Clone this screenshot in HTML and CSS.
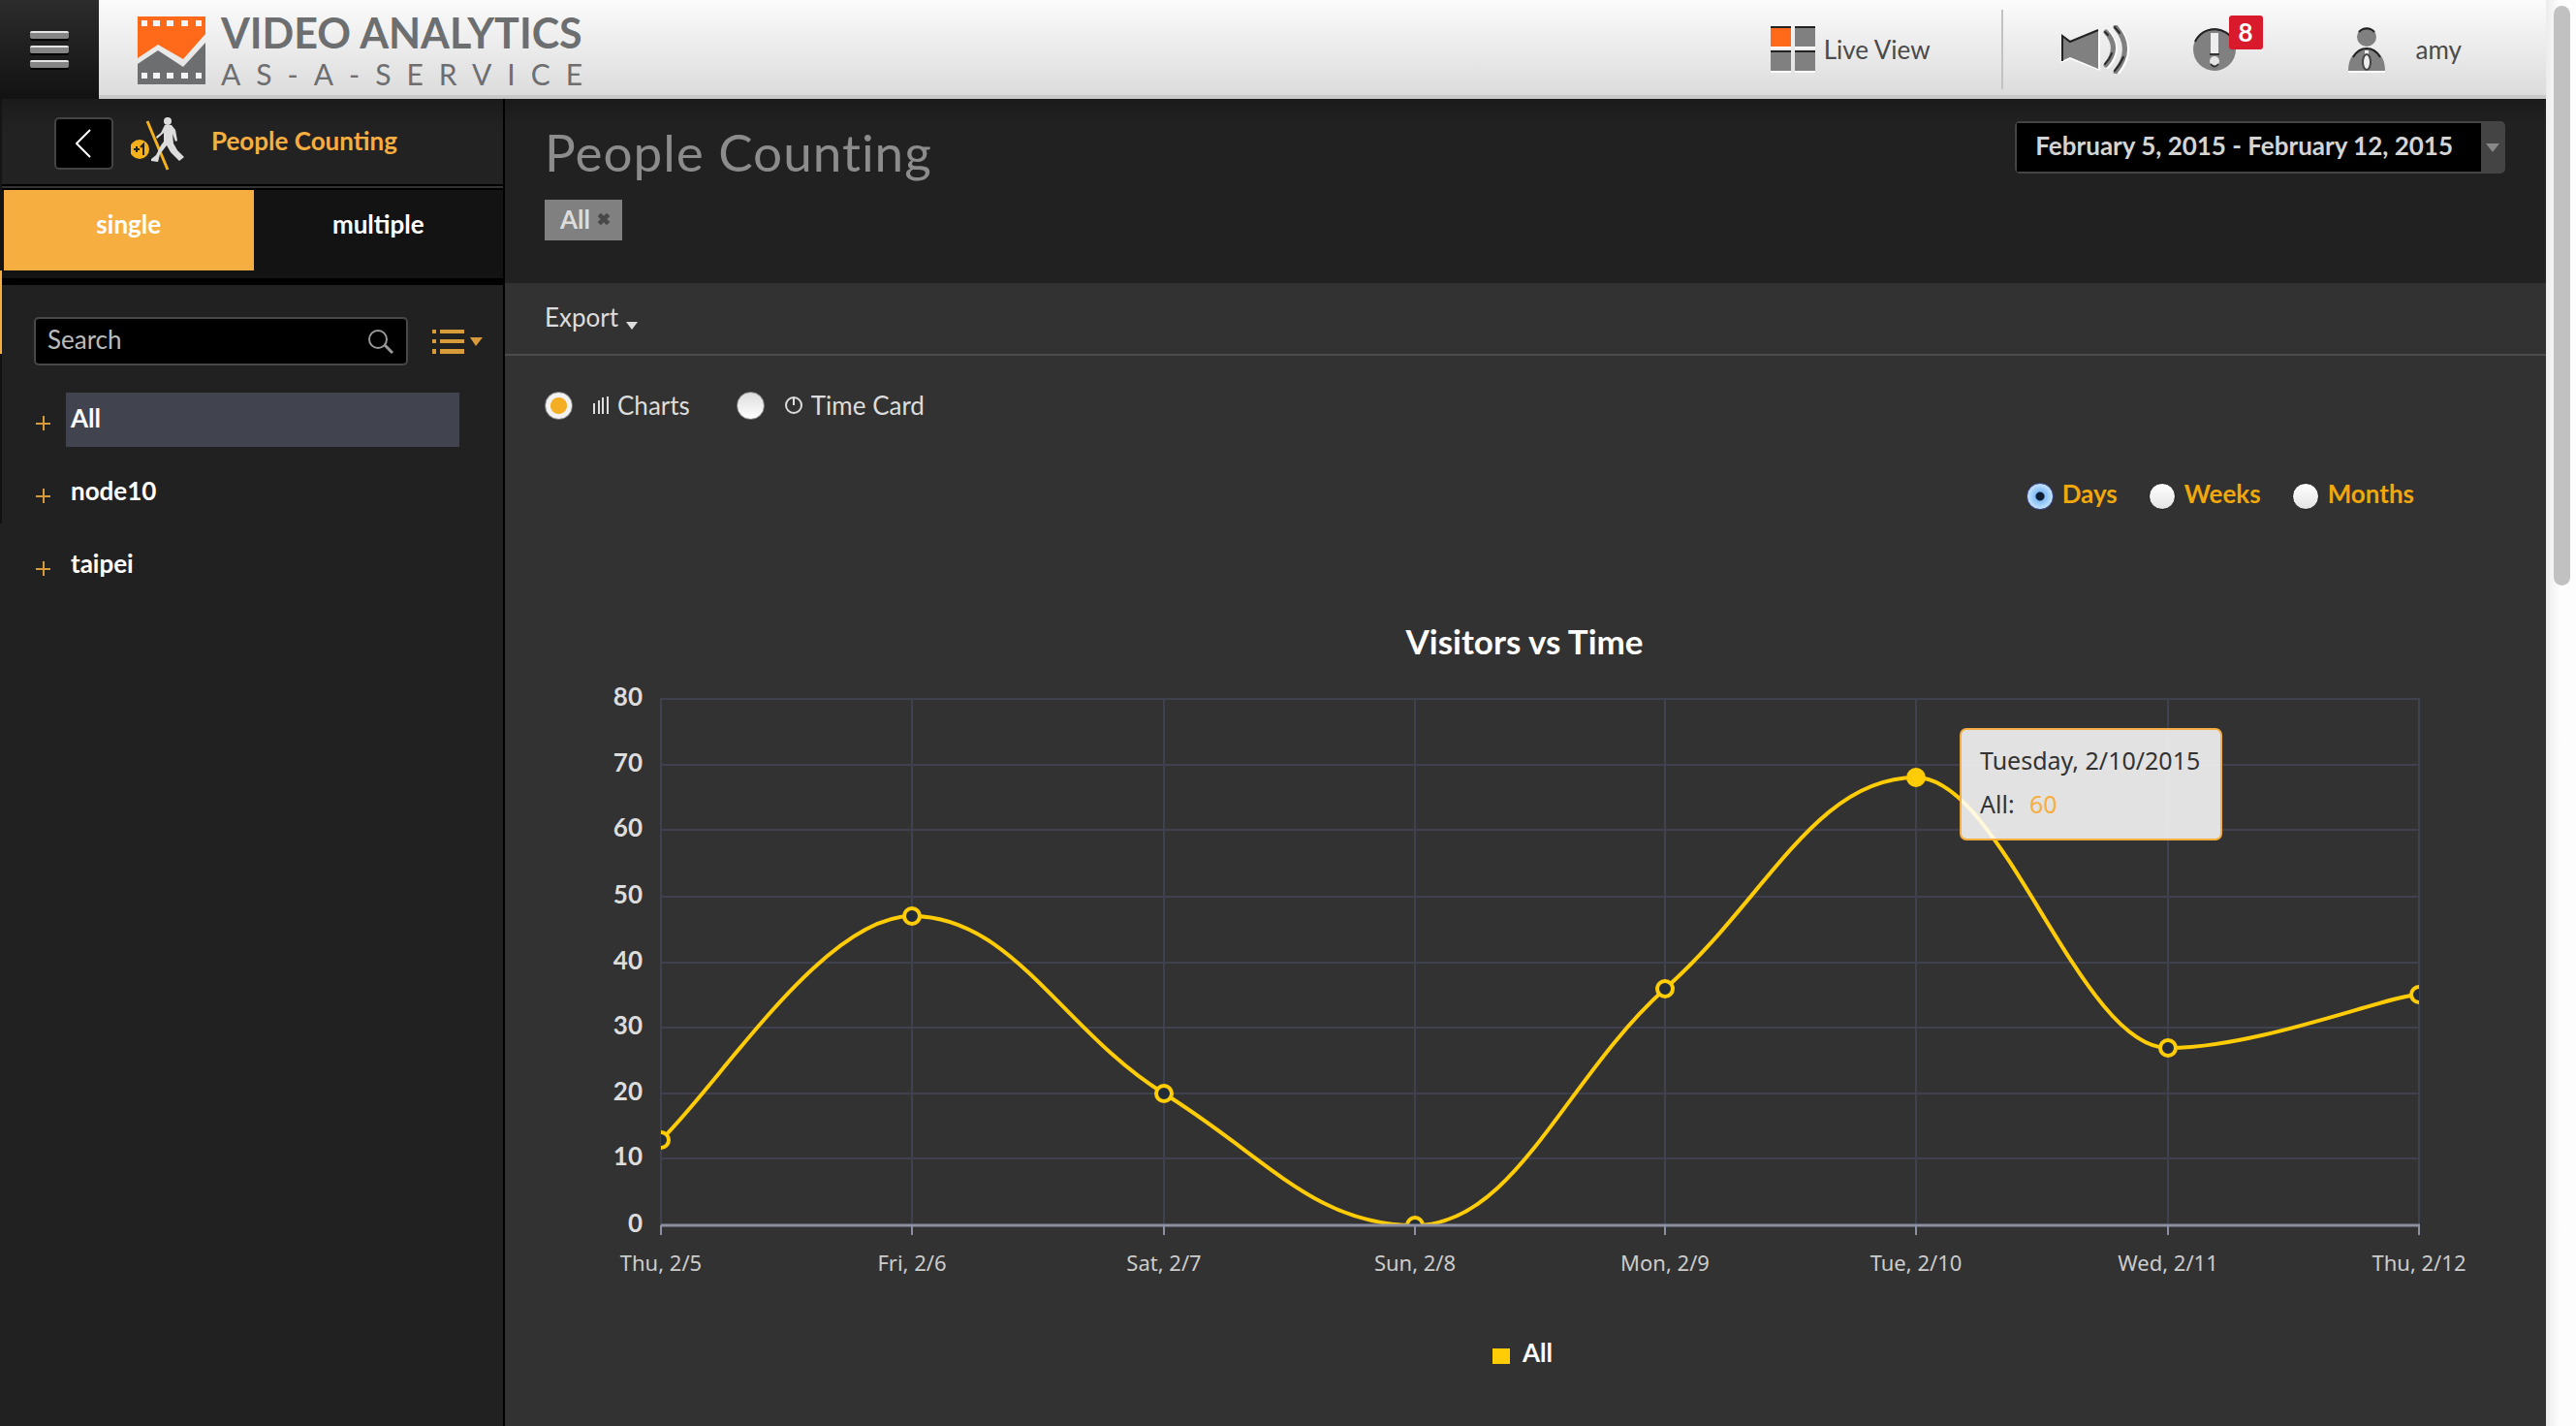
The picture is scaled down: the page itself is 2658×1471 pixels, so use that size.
FILE: index.html
```html
<!DOCTYPE html>
<html lang="en">
<head>
<meta charset="utf-8">
<title>People Counting - Video Analytics</title>
<meta name="viewport" content="width=device-width, initial-scale=1">
<link rel="stylesheet" href="styles.css">
</head>
<body>
<div class="app">
  <header class="topbar">
    <button class="menu-btn" type="button" aria-label="Menu"><span></span><span></span><span></span></button>
    <a class="brand" href="#">
      <svg class="brand-mark" viewBox="0 0 70 70" aria-hidden="true">
        <path fill="#ff6a1a" d="M0 0h70v18L47 44 21 29 0 43z"/>
        <path fill="#6d6e70" d="M0 49l21-14 26 17 23-25v43H0z"/>
        <g fill="#f4f4f4"><path d="M4 4h6v6H4zM16 4h7v6h-7zM30 4h7v6h-7zM45 4h7v6h-7zM60 4h6v6h-6zM4 58h6v6H4zM16 58h7v6h-7zM30 58h7v6h-7zM45 58h7v6h-7zM60 58h6v6h-6z"/></g>
      </svg>
      <span class="brand-text"><span class="brand-name">VIDEO ANALYTICS</span><span class="brand-sub">AS-A-SERVICE</span></span>
    </a>
    <nav class="top-actions">
      <a class="live" href="#">
        <svg width="46" height="48" viewBox="0 0 46 48" aria-hidden="true">
          <path fill="#ff6a1a" d="M0 0h21v21H0z"/><path fill="#808080" d="M25 0h21v21H25zM0 25h21v21H0zM25 25h21v21H25z"/>
          <path fill="#222" d="M0 0h21v2H0zM25 0h21v2H25zM0 25h21v2H0zM25 25h21v2H25z"/><path fill="#fff" d="M0 21h21v2H0zM25 21h21v2H25zM0 46h21v2H0zM25 46h21v2H25z"/>
        </svg>
        <span>Live View</span>
      </a>
      <button class="icon-btn sound" type="button" aria-label="Sound">
        <svg width="70" height="50" viewBox="0 0 70 50" aria-hidden="true">
          <path fill="#fff" d="M0 37l9-5 29 13V5h2v42L9 35l-9 4z"/>
          <path fill="#808080" d="M0 10l9 6L38 5v40L9 33l-9 4z"/><path fill="none" stroke="#222" stroke-width="2" d="M1 37V11l8 6L38 5"/>
          <g fill="none" stroke-linecap="round"><path stroke="#fff" stroke-width="5" d="M48 8q15 16 0 34M58 3q19 22 0 46"/><path stroke="#808080" stroke-width="5" d="M46 7q15 16 0 34M56 2q19 22 0 46"/><path stroke="#2a2a2a" stroke-width="2" d="M45 7l3 3M45 40q5-5 7-11M55 2l5 6M55 47q6-7 9-14"/></g>
        </svg>
      </button>
      <button class="icon-btn alerts" type="button" aria-label="Alerts, 8 new">
        <svg width="46" height="46" viewBox="0 0 46 46" aria-hidden="true">
          <circle cx="23" cy="23" r="22" fill="#808080"/><path d="M3 15a22 22 0 0 1 40 0" fill="none" stroke="#222" stroke-width="2"/>
          <path fill="#eee" d="M19 6h8v22h-8z"/><path d="M18 28h10" stroke="#333" stroke-width="2"/><circle cx="23" cy="35" r="5" fill="#e4e4e4"/><path d="M19 38q4 5 8 0" fill="none" stroke="#333" stroke-width="2"/>
        </svg>
        <span class="badge">8</span>
      </button>
      <a class="user" href="#">
        <svg width="38" height="47" viewBox="0 0 38 47" aria-hidden="true">
          <circle cx="19" cy="10" r="10" fill="#808080"/><path d="M11 5a10 9 0 0 1 16 0" fill="none" stroke="#222" stroke-width="2"/>
          <path fill="#fff" d="M0 44h38v3H0z"/><path fill="#808080" d="M0 45C0 30 8 22 19 22s19 8 19 23z"/><path d="M5 31C8 26 12 22 19 22s11 4 14 9" fill="none" stroke="#222" stroke-width="2"/>
          <path fill="#eee" d="M17 24h4v4h-4z"/><ellipse cx="19" cy="36" rx="4" ry="8" fill="#eee" stroke="#444" stroke-width="2"/>
        </svg>
        <span>amy</span>
      </a>
    </nav>
  </header>

  <div class="body">
    <aside class="sidebar">
      <div class="rail" aria-hidden="true"></div>
      <div class="side-main">
        <div class="side-head">
          <button class="back" type="button" aria-label="Back"><svg width="18" height="30" viewBox="0 0 18 30" aria-hidden="true"><path d="M15 1L1 15l14 14" fill="none" stroke="#fff" stroke-width="2"/></svg></button>
          <svg class="walker" width="56" height="56" viewBox="0 0 56 56" aria-hidden="true">
            <path d="M17 5l21 50" stroke="#f4b11c" stroke-width="3"/>
            <circle cx="9" cy="34" r="10" fill="#f4b11c"/><path d="M3 34h6M6 31v6M10 32l3-3v11" fill="none" stroke="#222" stroke-width="2"/>
            <circle cx="38" cy="5" r="4" fill="#ddd"/>
            <path fill="#ddd" d="M35 9h7l4 5 2 11-2 1-3-8 1 10 4 7 7 7-5 4-9-9-4-7-7 9-2 8-7-1v-2l5-4 5-10 3-4v-9l-7 6-1-2 5-4z"/>
          </svg>
          <h2>People Counting</h2>
        </div>
        <div class="tabs"><button class="tab active" type="button">single</button><button class="tab" type="button">multiple</button></div>
        <div class="search-row">
          <label class="search"><input type="text" placeholder="Search" aria-label="Search">
            <svg width="28" height="26" viewBox="0 0 28 26" aria-hidden="true"><circle cx="11" cy="11" r="9" fill="none" stroke="#999" stroke-width="2"/><path d="M18 17l8 8" stroke="#999" stroke-width="3"/></svg></label>
          <button class="list-btn" type="button" aria-label="List options"><svg width="52" height="25" viewBox="0 0 52 25" aria-hidden="true"><path fill="#d89b3a" d="M0 0h4v4H0zM8 0h25v4H8zM0 10h4v4H0zM8 10h25v4H8zM0 20h4v5H0zM8 20h25v5H8zM39 8h13l-7 9z"/></svg></button>
        </div>
        <ul class="tree">
          <li><button class="plus" type="button" aria-label="Expand All"></button><a class="node selected" href="#">All</a></li>
          <li><button class="plus" type="button" aria-label="Expand node10"></button><a class="node" href="#">node10</a></li>
          <li><button class="plus" type="button" aria-label="Expand taipei"></button><a class="node" href="#">taipei</a></li>
        </ul>
      </div>
    </aside>

    <main class="content">
      <section class="page-head">
        <div>
          <h1>People Counting</h1>
          <button class="chip" type="button">All <svg width="14" height="14" viewBox="0 0 12 12" aria-hidden="true"><path d="M2 2l8 8M10 2l-8 8" stroke="#484848" stroke-width="4"/></svg></button>
        </div>
        <button class="date-range" type="button"><span>February 5, 2015 - February 12, 2015</span><i></i></button>
      </section>
      <div class="toolbar"><button class="export" type="button">Export <i></i></button></div>
      <div class="view-opts">
        <label><input class="r-view" type="radio" name="view" checked>
          <svg width="16" height="18" viewBox="0 0 16 18" aria-hidden="true"><path fill="#ddd" d="M0 7h2v11H0zM5 4h2v14H5zM9 1h2v17H9zM14 0h2v18h-2z"/></svg>Charts</label>
        <label><input class="r-view" type="radio" name="view">
          <svg width="18" height="18" viewBox="0 0 18 18" aria-hidden="true"><circle cx="9" cy="9" r="8" fill="none" stroke="#ddd" stroke-width="2"/><path d="M9 1v8" stroke="#ddd" stroke-width="2"/></svg>Time Card</label>
      </div>
      <div class="period">
        <label><input class="r-period" type="radio" name="period" checked>Days</label>
        <label><input class="r-period" type="radio" name="period">Weeks</label>
        <label><input class="r-period" type="radio" name="period">Months</label>
      </div>
      <svg class="chart" viewBox="0 0 2106 850" role="img" aria-label="Visitors vs Time">
        <defs><clipPath id="plot"><rect x="161" y="100" width="1814" height="543"/></clipPath></defs>
        <text class="c-title" x="1052" y="54">Visitors vs Time</text>
        <path class="grid" d="M160 100h1816M160 168h1816M160 235h1816M160 304h1816M160 372h1816M160 439h1816M160 507h1816M160 574h1816M161 100v543M420 100v543M680 100v543M939 100v543M1197 100v543M1456 100v543M1716 100v543M1975 100v543"/>
        <path class="ticks" d="M161 643v10M420 643v10M680 643v10M939 643v10M1197 643v10M1456 643v10M1716 643v10M1975 643v10"/>
        <g class="ylab"><text x="142" y="107">80</text><text x="142" y="175">70</text><text x="142" y="242">60</text><text x="142" y="311">50</text><text x="142" y="379">40</text><text x="142" y="446">30</text><text x="142" y="514">20</text><text x="142" y="581">10</text><text x="142" y="650">0</text></g>
        <g class="xlab"><text x="161" y="690">Thu, 2/5</text><text x="420" y="690">Fri, 2/6</text><text x="680" y="690">Sat, 2/7</text><text x="939" y="690">Sun, 2/8</text><text x="1197" y="690">Mon, 2/9</text><text x="1456" y="690">Tue, 2/10</text><text x="1716" y="690">Wed, 2/11</text><text x="1975" y="690">Thu, 2/12</text></g>
        <g clip-path="url(#plot)">
          <path class="line" d="M161 555C225 492 330 324 420 324C524 324 576 443 680 507C784 571 835 643 939 643C1042 643 1094 491 1197 399C1301 307 1352 181 1456 181C1545 181 1625 460 1716 460C1810 460 1945 405 1975 405"/>
          <g class="dots"><circle cx="161" cy="555" r="8"/><circle cx="420" cy="324" r="8"/><circle cx="680" cy="507" r="8"/><circle cx="939" cy="643" r="8"/><circle cx="1197" cy="399" r="8"/><circle class="hot" cx="1456" cy="181" r="8"/><circle cx="1716" cy="460" r="8"/><circle cx="1975" cy="405" r="8"/></g>
        </g>
        <path class="axis" d="M161 643h1815"/>
        <g class="tip"><rect x="1502" y="131" width="269" height="114" rx="6"/><text x="1522" y="173">Tuesday, 2/10/2015</text><text x="1522" y="218">All:</text><text class="val" x="1573" y="218">60</text></g>
        <rect x="1019" y="770" width="18" height="16" fill="#ffcc05"/><text class="legend" x="1050" y="784">All</text>
      </svg>
    </main>
  </div>
</div>
<div class="scroll-track" aria-hidden="true"><div class="scroll-thumb"></div></div>
</body>
</html>
```
FILE: styles.css
```css
* { box-sizing: border-box; }
body {
  margin: 0;
  display: flex;
  min-height: 100vh;
  background: #323232;
  color: #ddd;
  font-family: Lato, "Noto Sans", sans-serif;
  font-size: 26px;
  line-height: 30px;
}
button { font: inherit; color: inherit; border: 0; padding: 0; background: none; cursor: pointer; }
a { color: inherit; text-decoration: none; }
svg { display: block; flex: none; }
h1, h2, ul { margin: 0; padding: 0; }

.app { flex: 1; min-width: 0; display: flex; flex-direction: column; }

/* top bar */
.topbar {
  display: flex;
  height: 102px;
  background: linear-gradient(#fbfbfb, #dcdcdc);
  border-bottom: 4px solid #c8c8c8;
  color: #4a4a4a;
}
.menu-btn {
  width: 102px;
  height: 102px;
  background: linear-gradient(#2c2c2c, #121212);
  display: flex;
  flex-direction: column;
  align-items: center;
  justify-content: center;
  gap: 7px;
}
.menu-btn span {
  width: 40px;
  height: 8px;
  border-radius: 2px;
  background: linear-gradient(#e4e4e4 30%, #858585 31%);
  box-shadow: 0 2px 0 #000;
}
.brand { display: flex; gap: 16px; padding: 17px 0 0 40px; color: #6d6e70; }
.brand-mark { width: 70px; height: 70px; }
.brand-text { display: flex; flex-direction: column; }
.brand-name { font-size: 43px; line-height: 34px; font-weight: 700; }
.brand-sub { font-size: 30px; line-height: 50px; letter-spacing: 16px; }
.top-actions { margin-left: auto; padding-top: 4px; display: flex; align-items: center; }
.live { display: flex; align-items: center; gap: 9px; height: 82px; padding-right: 73px; border-right: 2px solid #c2c2c2; }
.sound { margin-left: 60px; }
.alerts { position: relative; margin-left: 65px; }
.badge {
  position: absolute;
  left: 38px;
  top: -12px;
  width: 35px;
  height: 35px;
  border-radius: 3px;
  background: #d9192c;
  color: #fff;
  font-weight: 700;
  line-height: 34px;
}
.user { display: flex; align-items: center; gap: 32px; margin: 0 87px 0 115px; }

.body { flex: 1; display: flex; }

/* sidebar */
.sidebar { width: 521px; flex: none; display: flex; background: #212121; border-right: 2px solid #000; }
.rail { width: 2px; height: 438px; background: linear-gradient(#151515 177px, #f7ae40 177px 263px, #111 263px); }
.side-main { flex: 1; }
.side-head {
  display: flex;
  align-items: center;
  height: 94px;
  padding-left: 54px;
  background: linear-gradient(#1b1b1b, #222 30px);
  border-bottom: 2px solid #000;
  box-shadow: inset 0 -2px #333, inset 0 -4px #000;
}
.back { width: 61px; height: 54px; display: grid; place-items: center; background: #000; border: 2px solid #444; border-radius: 5px; }
.walker { margin-left: 18px; }
.side-head h2 { margin-left: 27px; padding-bottom: 6px; font-size: 26px; line-height: 30px; font-weight: 700; color: #f7ae40; }
.tabs { display: flex; height: 98px; padding: 0 0 8px 2px; background: #131313; border-bottom: 7px solid #000; }
.tab { flex: 1; color: #fff; font-weight: 700; padding-bottom: 14px; }
.tab.active { background: #f7ae40; }
.search-row { display: flex; align-items: center; gap: 25px; padding: 33px 0 0 33px; }
.search { display: flex; align-items: center; width: 386px; height: 50px; padding: 0 12px; background: #000; border: 2px solid #484848; border-radius: 5px; }
.search input { flex: 1; min-width: 0; padding: 0 0 4px; border: 0; outline: 0; background: none; font: inherit; color: #bbb; }
.search input::placeholder { color: #bbb; opacity: 1; }
.tree { list-style: none; padding: 28px 45px 0 35px; display: grid; gap: 19px; }
.tree li { display: flex; align-items: center; gap: 16px; }
.plus { width: 15px; height: 15px; margin-top: 7px; background: linear-gradient(#d89b3a, #d89b3a) center / 15px 2px no-repeat, linear-gradient(#d89b3a, #d89b3a) center / 2px 15px no-repeat; }
.node { flex: 1; height: 56px; padding: 11px 5px; color: #fff; font-weight: 700; }
.node.selected { background: #41444f; }

/* main area */
.content { flex: 1; min-width: 0; }
.page-head {
  display: flex;
  justify-content: space-between;
  align-items: flex-start;
  padding: 23px 42px 44px 41px;
  background: linear-gradient(#1a1a1a, #212121 24px);
}
h1 { font-size: 53px; line-height: 64px; font-weight: 400; letter-spacing: 1px; color: #8c8c8c; }
.chip { display: flex; align-items: center; gap: 7px; height: 42px; margin-top: 17px; padding: 0 12px 2px 16px; background: #808080; font-weight: 700; }
.date-range { display: flex; align-items: stretch; height: 54px; background: #444; border: 2px solid #444; border-radius: 5px; color: #d4d4d4; font-weight: 700; }
.date-range span { background: #000; padding: 8px 29px 8px 19px; }
.date-range i { align-self: center; margin: 0 4px 0 5px; border: 7px solid transparent; border-top: 9px solid #888; border-bottom: 0; }
.toolbar { height: 75px; padding: 20px 41px; border-bottom: 2px solid #4c4c4c; }
.export { display: flex; align-items: flex-end; gap: 8px; }
.export i { margin-bottom: 2px; border: 6px solid transparent; border-top: 8px solid #ddd; border-bottom: 0; }
.view-opts { display: flex; gap: 48px; padding: 36px 41px 0; }
.view-opts label { display: flex; align-items: center; }
.view-opts svg { margin: 0 9px 0 21px; }
input[type="radio"] { appearance: none; margin: 0; border-radius: 50%; }
.r-view { width: 29px; height: 29px; background: linear-gradient(#ddd, #fff); border: 1px solid #888; }
.r-view:checked { background: radial-gradient(circle, #f4ae24 8px, #f2f2f2 9px); }
.period { display: flex; justify-content: flex-end; gap: 32px; padding: 59px 136px 0 0; color: #f0a80c; font-weight: 700; }
.period label { display: flex; align-items: center; gap: 9px; }
.period .r-period { width: 28px; height: 28px; margin-top: 6px; background: linear-gradient(#fff, #e4e4e4); border: 1px solid #222; }
.period .r-period:checked { background: radial-gradient(circle, #0b1c33 4px, #7fbdf5 5px, #cfe8ff 14px); border-color: #3b4c8c; }

/* chart */
.chart { width: 100%; height: auto; margin-top: 95px; }
.c-title { font-size: 35px; font-weight: 700; fill: #fff; text-anchor: middle; }
.grid { fill: none; stroke: #3f424e; stroke-width: 2; }
.axis { stroke: #8d90a3; stroke-width: 3; }
.ticks { stroke: #8d90a3; stroke-width: 2; }
.ylab { font-size: 26px; font-weight: 700; fill: #ddd; text-anchor: end; }
.xlab { font: 22px "Noto Sans", sans-serif; fill: #ccc; text-anchor: middle; }
.line { fill: none; stroke: #ffcc05; stroke-width: 4; }
.dots { fill: #222b36; stroke: #ffcc05; stroke-width: 4; }
.dots .hot { fill: #ffcc05; }
.tip { font: 25px "Noto Sans", sans-serif; fill: #333; }
.tip rect { fill: #fff; fill-opacity: 0.86; stroke: #f7ae40; stroke-width: 2; }
.val { fill: #f7ae40; }
.legend { font-size: 26px; font-weight: 700; fill: #fff; }

/* page scrollbar */
.scroll-track { width: 31px; padding: 6px 6px 0 8px; background: linear-gradient(90deg, #ececec, #fdfdfd 14px); }
.scroll-thumb { height: 598px; border-radius: 9px; background: #c1c1c1; }
```
